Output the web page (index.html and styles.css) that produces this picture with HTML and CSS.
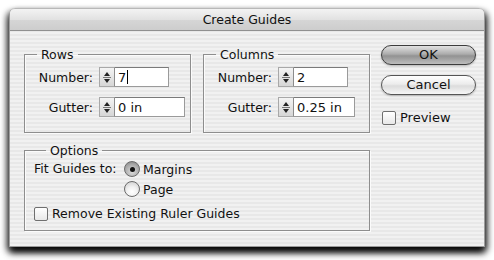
FILE: index.html
```html
<!DOCTYPE html>
<html>
<head>
<meta charset="utf-8">
<link rel="stylesheet" href="styles.css">
</head>
<body>
<div class="window">
  <div class="titlebar">Create Guides</div>
  <div class="content">
    <div class="top">
      <fieldset class="group small">
        <legend>Rows</legend>
        <div class="field">
          <span class="label">Number:</span>
          <span class="spin"><span class="up"></span><span class="down"></span></span>
          <span class="input w70">7<span class="caret"></span></span>
        </div>
        <div class="field">
          <span class="label">Gutter:</span>
          <span class="spin"><span class="up"></span><span class="down"></span></span>
          <span class="input w86">0 in</span>
        </div>
      </fieldset>
      <fieldset class="group small">
        <legend>Columns</legend>
        <div class="field">
          <span class="label">Number:</span>
          <span class="spin"><span class="up"></span><span class="down"></span></span>
          <span class="input w70">2</span>
        </div>
        <div class="field">
          <span class="label">Gutter:</span>
          <span class="spin"><span class="up"></span><span class="down"></span></span>
          <span class="input w77">0.25 in</span>
        </div>
      </fieldset>
      <div class="buttons">
        <div class="btn default">OK</div>
        <div class="btn">Cancel</div>
        <div class="check-row"><span class="checkbox"></span>Preview</div>
      </div>
    </div>
    <fieldset class="group options">
      <legend>Options</legend>
      <div class="fit">
        <span class="fit-label">Fit Guides to:</span>
        <div class="radios">
          <div class="radio-row"><span class="radio on"></span>Margins</div>
          <div class="radio-row"><span class="radio"></span>Page</div>
        </div>
      </div>
      <div class="check-row remove"><span class="checkbox"></span>Remove Existing Ruler Guides</div>
    </fieldset>
  </div>
</div>
</body>
</html>
```
FILE: styles.css
```css
html, body {
  margin: 0;
  padding: 0;
  background: #ffffff;
}
body {
  font-family: "DejaVu Sans", "Liberation Sans", sans-serif;
  font-size: 12.5px;
  color: #111;
  padding: 8px 9px 0 9px;
  min-height: 260px;
  box-sizing: border-box;
}
.window {
  width: 476px;
  height: 239px;
  box-sizing: border-box;
  border: 1px solid #9c9c9c;
  border-top: none;
  border-radius: 6px 6px 0 0;
  box-shadow: 0 6px 7px rgba(0,0,0,0.9), 3px 3px 6px rgba(0,0,0,0.5), -3px 3px 6px rgba(0,0,0,0.4);
  background: repeating-linear-gradient(to bottom, #f1f1f1 0px, #f1f1f1 2px, #e8e8e8 2px, #e8e8e8 4px);
  display: flex;
  flex-direction: column;
  overflow: hidden;
}
.titlebar {
  height: 21px;
  border-bottom: 1px solid #909090;
  border-top: 1px solid #b8b8b8;
  border-radius: 6px 6px 0 0;
  background: linear-gradient(to bottom, #f3f3f3, #e2e2e2 50%, #d6d6d6 51%, #cdcdcd);
  text-align: center;
  line-height: 21px;
  font-size: 12.5px;
  color: #111;
  margin: 0 -1px;
}
.content {
  padding: 14px 0 0 14px;
  display: flex;
  flex-direction: column;
}
.top {
  display: flex;
  align-items: flex-start;
}
fieldset.group {
  margin: 0;
  padding: 0;
  border: 1px solid #8e8e8e;
  box-shadow: inset 1px 1px 0 #fbfbfb, 1px 1px 0 #fbfbfb;
  box-sizing: border-box;
  min-width: 0;
}
fieldset.group legend {
  padding: 0 4px;
  margin-left: 12px;
  line-height: 15px;
  font-size: 12.5px;
}
.small {
  width: 167px;
  height: 86px;
  margin-top: 2px !important;
  margin-right: 12px !important;
  padding: 5px 0 0 0 !important;
  display: flex;
  flex-direction: column;
  gap: 10px;
}
.field {
  display: flex;
  align-items: center;
  height: 20px;
}
.label {
  width: 74px;
  text-align: right;
  padding-right: 6px;
  box-sizing: border-box;
}
.spin {
  width: 14px;
  height: 18px;
  border: 1px solid #a8a8a8;
  border-right: 1px solid #8c8c8c;
  background: linear-gradient(to bottom, #f4f4f4, #d6d6d6);
  display: flex;
  flex-direction: column;
  align-items: center;
  justify-content: center;
  gap: 3px;
  position: relative;
}
.spin::after {
  content: "";
  position: absolute;
  left: 3px;
  right: 3px;
  top: 9px;
  height: 1px;
  background: #777;
}
.up {
  width: 0; height: 0;
  border-left: 3.5px solid transparent;
  border-right: 3.5px solid transparent;
  border-bottom: 4px solid #222;
}
.down {
  width: 0; height: 0;
  border-left: 3.5px solid transparent;
  border-right: 3.5px solid transparent;
  border-top: 4px solid #222;
}
.input {
  height: 18px;
  border: 1px solid #9a9a9a;
  border-left: none;
  border-top-color: #7a7a7a;
  background: #fff;
  padding-left: 3px;
  box-sizing: content-box;
  font-size: 13px;
  display: flex;
  align-items: center;
}
.w70 { width: 50px; }
.w86 { width: 66px; }
.w77 { width: 57px; }
.caret {
  display: inline-block;
  width: 1px;
  height: 14px;
  background: #000;
  margin-left: 1px;
}
.buttons {
  margin-left: -1px;
  width: 95px;
  display: flex;
  flex-direction: column;
}
.btn {
  height: 18px;
  border: 1px solid #555;
  border-radius: 10px;
  text-align: center;
  line-height: 18px;
  font-size: 13px;
  background: linear-gradient(to bottom, #ffffff 0%, #ececec 45%, #dcdcdc 55%, #f6f6f6 100%);
  box-shadow: 0 1px 2px rgba(0,0,0,0.25);
  margin-bottom: 10px;
}
.btn.default {
  border-color: #3c3c3c;
  background: linear-gradient(to bottom, #e2e2e2 0%, #acacac 45%, #929292 55%, #bdbdbd 100%);
}
.check-row {
  display: flex;
  align-items: center;
}
.buttons .check-row {
  margin-top: 5px;
  margin-left: 1px;
  font-size: 13px;
}
.checkbox {
  width: 12px;
  height: 12px;
  border: 1px solid #6f6f6f;
  border-radius: 2px;
  background: linear-gradient(to bottom, #ffffff, #e8e8e8);
  margin-right: 4px;
}
.options {
  margin-top: 10px !important;
  width: 346px;
  height: 88px;
  padding: 0 0 0 9px !important;
}
.fit {
  display: flex;
  align-items: flex-start;
  margin-top: 2px;
}
.fit-label {
  width: 90px;
  line-height: 18px;
}
.radios {
  display: flex;
  flex-direction: column;
  gap: 2px;
}
.radio-row {
  display: flex;
  align-items: center;
  height: 18px;
}
.radio {
  width: 14px;
  height: 14px;
  border: 1px solid #6a6a6a;
  border-radius: 50%;
  background: radial-gradient(circle at 50% 70%, #ffffff 0%, #f2f2f2 40%, #c9c9c9 100%);
  margin-right: 3px;
  display: flex;
  align-items: center;
  justify-content: center;
}
.radio.on {
  background: radial-gradient(circle at 50% 70%, #dcdcdc 0%, #a9a9a9 60%, #7c7c7c 100%);
}
.radio.on::after {
  content: "";
  width: 5px;
  height: 5px;
  border-radius: 50%;
  background: #111;
}
.remove {
  margin-top: 8px;
}
```
